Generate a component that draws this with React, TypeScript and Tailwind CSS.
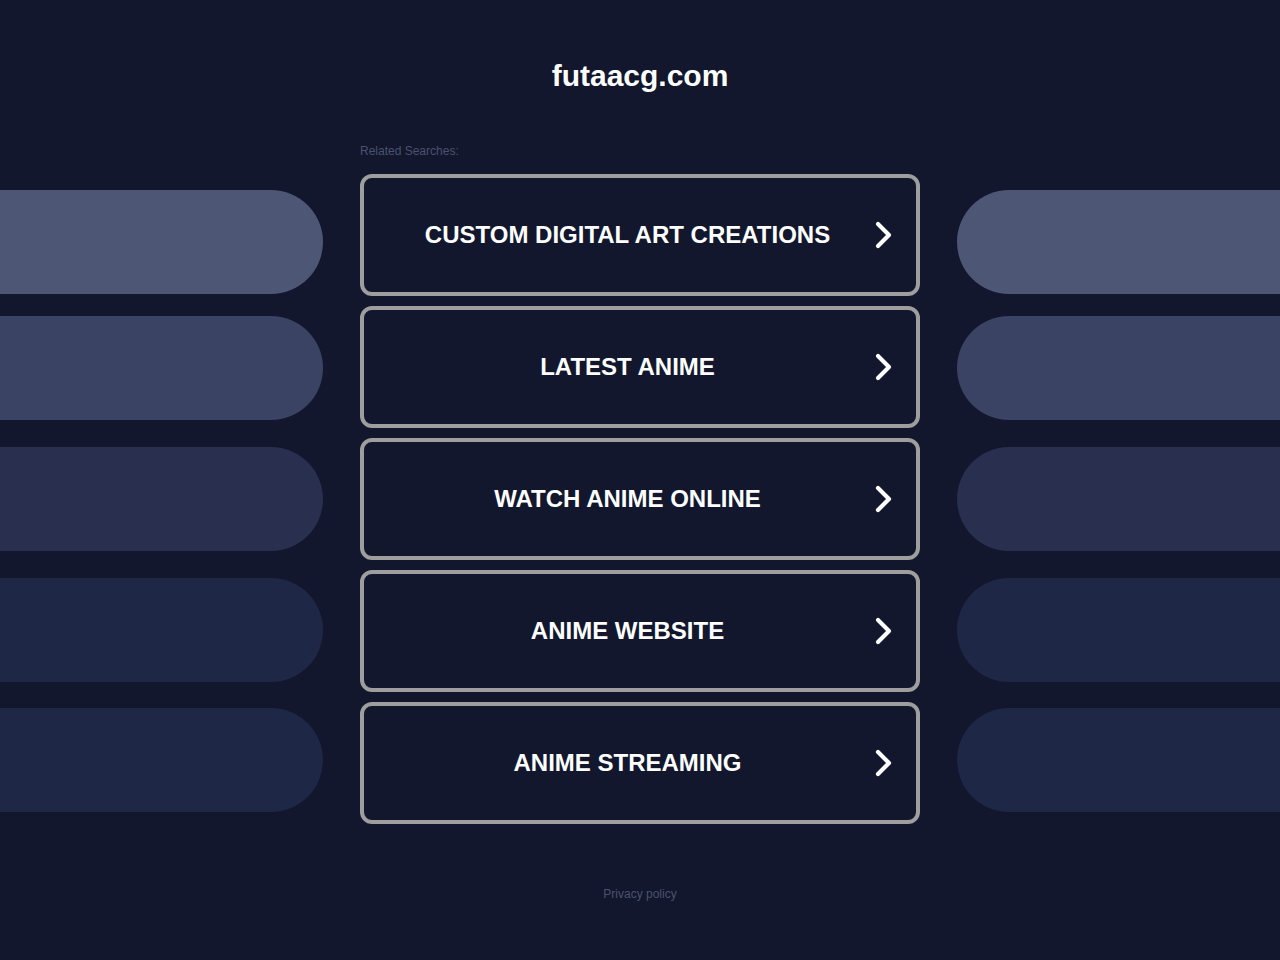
import React from "react";

const rows = [
  { label: "CUSTOM DIGITAL ART CREATIONS", pill: "bg-[#4d5775]", shift: "translate-y-[7px]" },
  { label: "LATEST ANIME", pill: "bg-[#3a4363]", shift: "translate-y-[1px]" },
  { label: "WATCH ANIME ONLINE", pill: "bg-[#282f4f]", shift: "" },
  { label: "ANIME WEBSITE", pill: "bg-[#1f2746]", shift: "-translate-y-[1px]" },
  { label: "ANIME STREAMING", pill: "bg-[#1e2746]", shift: "-translate-y-[3px]" },
];

function Chevron() {
  return (
    <svg width="22" height="32" viewBox="0 0 22 32" className="shrink-0">
      <path d="M5 5 L16 16 L5 27" fill="none" stroke="#ffffff" strokeWidth="4.2" strokeLinecap="round" strokeLinejoin="round" />
    </svg>
  );
}

export default function App() {
  return (
    <div className="min-h-[960px] w-full bg-[#12172d] flex flex-col items-center font-['Liberation_Sans',Arial,sans-serif] overflow-hidden">
      <h1 className="mt-[58px] text-[30px] leading-[36px] font-bold text-white">futaacg.com</h1>
      <div className="mt-[50px] w-[560px] text-[12px] leading-[14px] text-[#4b526e]">Related Searches:</div>
      <div className="mt-[16px] flex flex-col gap-[10px] w-full">
        {rows.map((r) => (
          <div key={r.label} className="flex items-center w-full">
            <div className={`flex-1 h-[104px] rounded-r-[52px] ${r.pill} ${r.shift} mr-[37px]`} />
            <div className="w-[560px] h-[122px] border-[4px] border-[#9e9e9e] rounded-[12px] flex items-center pl-[20px] pr-[21px]">
              <span className="flex-1 text-center text-white font-bold text-[24px] leading-[28px] pl-[30px]">{r.label}</span>
              <div className="ml-[32px]"><Chevron /></div>
            </div>
            <div className={`flex-1 h-[104px] rounded-l-[52px] ${r.pill} ${r.shift} ml-[37px]`} />
          </div>
        ))}
      </div>
      <div className="mt-[63px] text-[12px] leading-[14px] text-[#4b526e]">Privacy policy</div>
    </div>
  );
}
